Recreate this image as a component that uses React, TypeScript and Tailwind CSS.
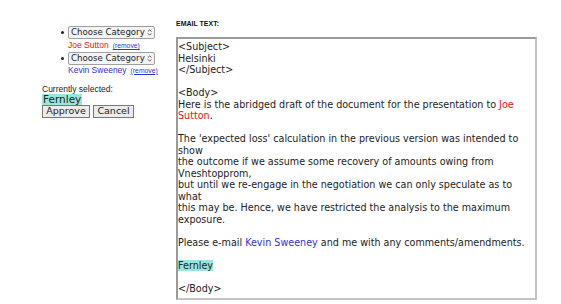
import React from "react";

function Select() {
  return (
    <div className="flex h-[13px] w-[87px] items-center justify-between rounded-[2px] border border-[#a0a0a0] bg-[#f4f4f4] pl-[2px] pr-[2px] text-[8.6px] leading-none whitespace-nowrap text-[#222] [font-family:'DejaVu_Sans',sans-serif]">
      <span>Choose Category</span>
      <svg width="6" height="9" viewBox="0 0 6 9" className="ml-[2px]">
        <path d="M1 3.5 L3 1.5 L5 3.5 M1 5.5 L3 7.5 L5 5.5" fill="none" stroke="#333" strokeWidth="0.9" />
      </svg>
    </div>
  );
}

const L = ({ children }: { children?: React.ReactNode }) => (
  <div className="h-[11.5px] whitespace-nowrap">{children}</div>
);

export default function App() {
  return (
    <div className="flex w-[561px] h-[304px] bg-white [font-family:'Liberation_Sans',Arial,sans-serif]">
      <div className="w-[176px] shrink-0 pt-[26px]">
        <ul className="pl-[68px]">
          <li className="relative">
            <span className="absolute left-[-7px] top-[5px] h-[3px] w-[3px] rounded-full bg-[#222]" />
            <Select />
            <div className="mt-[2px] flex items-baseline gap-[4px] leading-none">
              <span className="text-[8.5px] text-[#f01010]">Joe Sutton</span>
              <span className="text-[6.8px] text-[#3333dd] underline">(remove)</span>
            </div>
          </li>
          <li className="relative mt-[2px]">
            <span className="absolute left-[-7px] top-[5px] h-[3px] w-[3px] rounded-full bg-[#222]" />
            <Select />
            <div className="mt-[1px] flex items-baseline gap-[4px] leading-none">
              <span className="text-[8.5px] text-[#3333dd]">Kevin Sweeney</span>
              <span className="text-[6.8px] text-[#3333dd] underline">(remove)</span>
            </div>
          </li>
        </ul>
        <div className="pl-[42px] mt-[9px]">
          <div className="text-[8.5px] leading-[10px] text-[#222]">Currently selected:</div>
          <div className="w-fit bg-[#99e6dc] px-[1px] text-[10.5px] leading-[11px] text-[#222] [font-family:'DejaVu_Sans',sans-serif]">Fernley</div>
          <div className="flex gap-[3px]">
            <button className="h-[13px] w-[48px] border border-[#777] bg-[#ececec] text-[9.5px] leading-none text-[#222] [font-family:'DejaVu_Sans',sans-serif]">Approve</button>
            <button className="h-[13px] w-[41px] border border-[#777] bg-[#ececec] text-[9.5px] leading-none text-[#222] [font-family:'DejaVu_Sans',sans-serif]">Cancel</button>
          </div>
        </div>
      </div>
      <div className="pt-[20px]">
        <div className="text-[7px] font-bold leading-[8px] text-[#111] [font-family:'Liberation_Sans',Arial,sans-serif]">EMAIL TEXT:</div>
        <div className="mt-[9px] h-[263px] w-[361px] overflow-hidden border-2 border-t-[#9a9a9a] border-l-[#9a9a9a] border-r-[#c4c4c4] border-b-[#c4c4c4] pl-[0px] pt-[1px] text-[9.6px] text-[#222] [font-family:'DejaVu_Sans',sans-serif]">
          <L>&lt;Subject&gt;</L>
          <L>Helsinki</L>
          <L>&lt;/Subject&gt;</L>
          <L />
          <L>&lt;Body&gt;</L>
          <L>Here is the abridged draft of the document for the presentation to <span className="text-[#ee1111]">Joe</span></L>
          <L><span className="text-[#ee1111]">Sutton</span>.</L>
          <L />
          <L>The 'expected loss' calculation in the previous version was intended to</L>
          <L>show</L>
          <L>the outcome if we assume some recovery of amounts owing from</L>
          <L>Vneshtopprom,</L>
          <L>but until we re-engage in the negotiation we can only speculate as to</L>
          <L>what</L>
          <L>this may be. Hence, we have restricted the analysis to the maximum</L>
          <L>exposure.</L>
          <L />
          <L>Please e-mail <span className="text-[#3333dd]">Kevin Sweeney</span> and me with any comments/amendments.</L>
          <L />
          <L><span className="bg-[#99e6dc]">Fernley</span></L>
          <L />
          <L>&lt;/Body&gt;</L>
        </div>
      </div>
    </div>
  );
}
